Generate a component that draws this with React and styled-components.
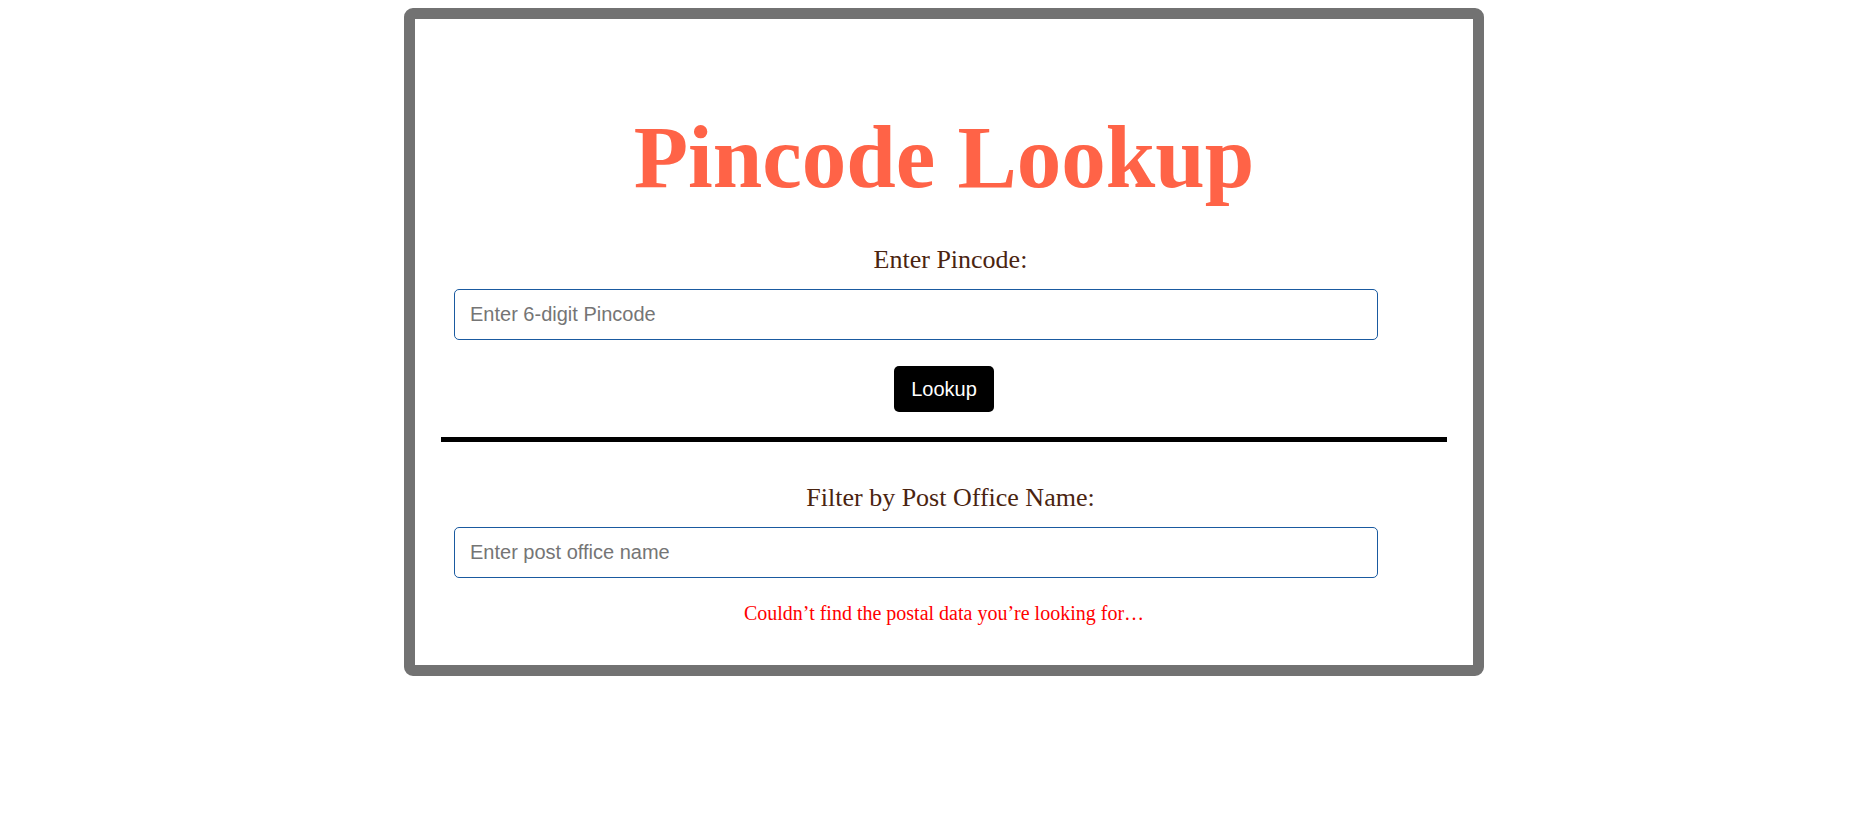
import React, { useState } from 'react';
import styled, { createGlobalStyle } from 'styled-components';

const GlobalStyle = createGlobalStyle`
  html, body { background: #ffffff; }
  body {
    margin: 8px;
    font-family: "Liberation Serif", "Times New Roman", serif;
  }
  * { box-sizing: border-box; }
`;

const Page = styled.div`
  display: flex;
  justify-content: center;
  padding-left: 24px;
`;

const Card = styled.main`
  width: 1080px;
  border: 11px solid #727272;
  border-radius: 9px;
  background: #ffffff;
  padding: 0 26px 40px;
  display: flex;
  flex-direction: column;
  align-items: stretch;
`;

const Title = styled.h1`
  margin: 87px 0 0;
  font-family: "Liberation Serif", "Times New Roman", serif;
  font-size: 89px;
  font-weight: 700;
  line-height: normal;
  color: #ff6347;
  text-align: center;
`;

const Label = styled.label`
  display: block;
  margin-top: ${(p) => p.$top}px;
  padding-left: 13px;
  font-family: "Liberation Serif", "Times New Roman", serif;
  font-size: 26px;
  line-height: normal;
  color: #4a2410;
  text-align: center;
`;

const Input = styled.input`
  display: block;
  width: 924px;
  height: 51px;
  margin: ${(p) => p.$top}px 0 0 13px;
  padding: 0 15px;
  border: 1px solid #1a5aa0;
  border-radius: 5px;
  background: #ffffff;
  font-family: "Liberation Sans", Arial, sans-serif;
  font-size: 20px;
  color: #222;
  outline: none;
  &::placeholder {
    color: #757575;
  }
`;

const ButtonRow = styled.div`
  display: flex;
  justify-content: center;
  margin-top: 26px;
`;

const Button = styled.button`
  height: 46px;
  padding: 0 17px;
  border: none;
  border-radius: 5px;
  background: #000000;
  color: #ffffff;
  font-family: "Liberation Sans", Arial, sans-serif;
  font-size: 20px;
  cursor: pointer;
`;

const Divider = styled.hr`
  width: 100%;
  height: 5px;
  margin: 25px 0 0;
  border: none;
  background: #000000;
`;

const ErrorText = styled.p`
  margin: 24px 0 0;
  font-family: "Liberation Serif", "Times New Roman", serif;
  font-size: 20px;
  line-height: normal;
  color: #ff0000;
  text-align: center;
`;

export default function App() {
  const [pin, setPin] = useState('');
  const [office, setOffice] = useState('');
  return (
    <>
      <GlobalStyle />
      <Page>
        <Card>
          <Title>Pincode Lookup</Title>
          <Label $top={37} htmlFor="pin">Enter Pincode:</Label>
          <Input
            $top={14}
            id="pin"
            placeholder="Enter 6-digit Pincode"
            value={pin}
            onChange={(e) => setPin(e.target.value)}
          />
          <ButtonRow>
            <Button type="button">Lookup</Button>
          </ButtonRow>
          <Divider />
          <Label $top={41} htmlFor="office">Filter by Post Office Name:</Label>
          <Input
            $top={14}
            id="office"
            placeholder="Enter post office name"
            value={office}
            onChange={(e) => setOffice(e.target.value)}
          />
          <ErrorText>Couldn’t find the postal data you’re looking for…</ErrorText>
        </Card>
      </Page>
    </>
  );
}
